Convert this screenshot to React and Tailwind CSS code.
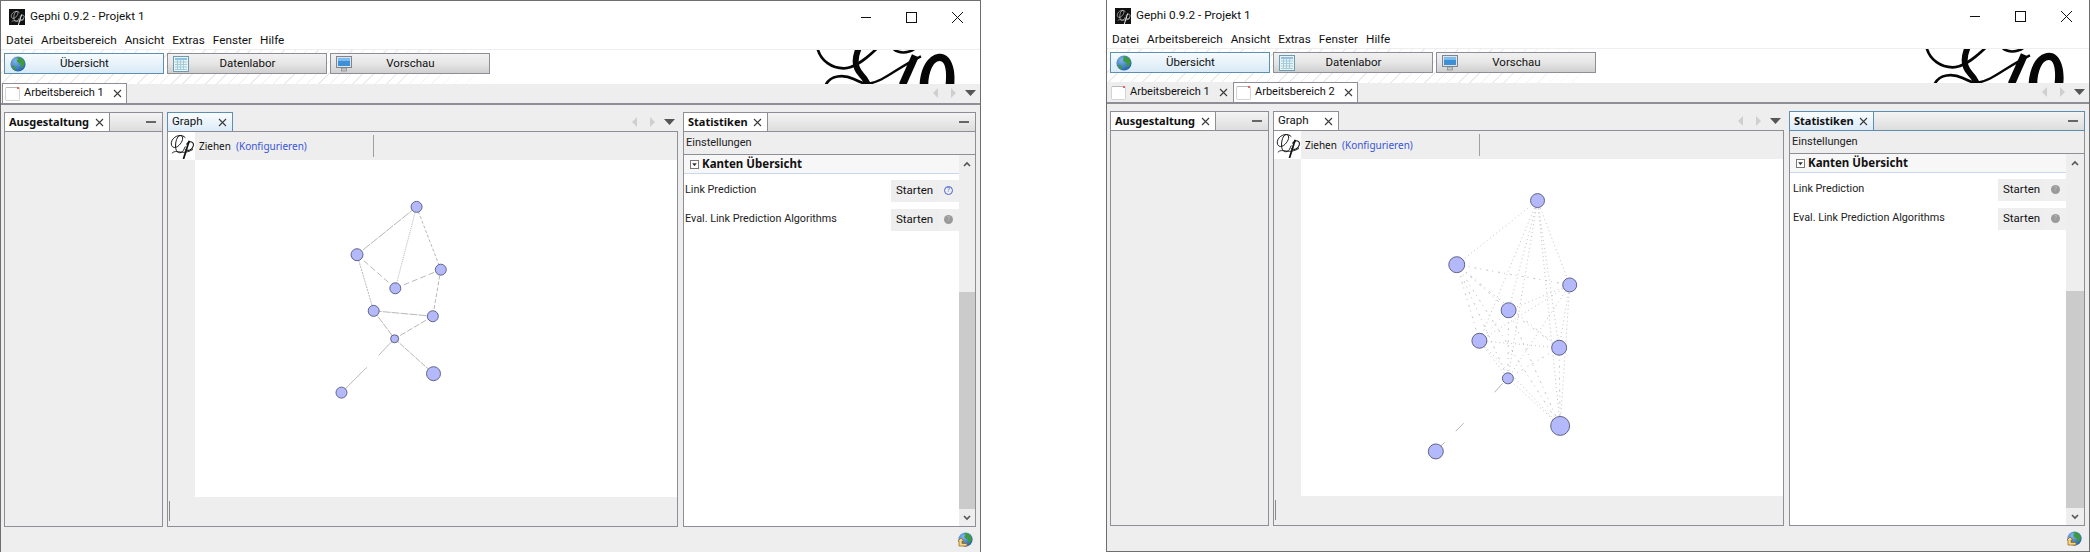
const nodesA = [
  [417, 207, 5.5], [357.3, 255, 6], [441.3, 270, 5.5], [395.7, 288.7, 5.5], [374, 311.3, 5.5],
  [433.3, 316.7, 5.5], [395, 339.3, 4], [434, 374.3, 7], [341.7, 393.3, 5.5],
];
const edgesA = [[0, 1, "9 1"], [0, 3, "1 1"], [0, 2, "3 2"], [1, 3, "6 3"], [3, 2, "6 3"], [1, 4, "2 1"], [2, 5, "4 2"], [4, 5, "8 1"], [4, 6, "7 1"], [5, 6, "6 2"], [6, 7, "6 1"]];

const nodesB = [
  [1538, 200.7, 7], [1457, 265, 8], [1570.3, 285.3, 7], [1509, 310.7, 7.5], [1479.7, 341.3, 7.5],
  [1559.7, 348.3, 7.5], [1508.3, 379, 5.5], [1560.7, 426.7, 9.5], [1436, 452.3, 7.5],
];

const Graph = ({ second }) => {
  const nodes = second ? nodesB : nodesA;
  const pairs = [];
  if (second) {
    for (let i = 0; i < 8; i++) for (let j = i + 1; j < 8; j++) pairs.push([i, j, i % 2 ? "1 5 2 4" : "1 3"]);
  } else {
    pairs.push(...edgesA);
  }
  return (
    <svg viewBox={second ? "1301 159 483 338" : "195 160 483 338"} className="block w-full h-full">
      {pairs.map(([a, b, dash], i) => (
        <line
          key={i}
          x1={nodes[a][0]}
          y1={nodes[a][1]}
          x2={nodes[b][0]}
          y2={nodes[b][1]}
          stroke={second ? "#bcbcbc" : "#a4a4a4"}
          strokeWidth={second ? 0.9 : 0.8}
          strokeDasharray={dash}
        />
      ))}
      {second ? (
        <g stroke="#b4b4b4" strokeWidth="1">
          <line x1="1503" y1="384" x2="1495" y2="393" />
          <line x1="1464" y1="424" x2="1456" y2="432" />
          <line x1="1445" y1="443" x2="1441" y2="447" />
        </g>
      ) : (
        <g stroke="#a8a8a8" strokeWidth="0.8">
          <line x1="395" y1="339" x2="379" y2="356" />
          <line x1="367" y1="368" x2="342" y2="393" />
        </g>
      )}
      {nodes.map(([x, y, r], i) => (
        <circle key={i} cx={x} cy={y} r={r} fill="#b3b9fb" stroke="#5f6288" strokeWidth="1" />
      ))}
    </svg>
  );
};

const CloseX = ({ className = "" }) => (
  <svg viewBox="0 0 9 9" className={`w-[9px] h-[9px] shrink-0 ${className}`}>
    <path d="M1 1L8 8M8 1L1 8" stroke="#3a3a3a" strokeWidth="1.1" />
  </svg>
);

const Globe = ({ size = 16 }) => (
  <svg viewBox="0 0 16 16" width={size} height={size} className="shrink-0">
    <defs>
      <radialGradient id="globeBlue" cx="35%" cy="30%" r="80%">
        <stop offset="0" stopColor="#7fb6e8" />
        <stop offset="1" stopColor="#1a5ba8" />
      </radialGradient>
    </defs>
    <circle cx="8" cy="8" r="7.6" fill="url(#globeBlue)" />
    <path d="M7 1.2C9 .8 13 2 14.6 6L14 9.5 12 12 10.5 10.5 11 8 8.5 7 6.5 5 8 3.5Z" fill="#3f9a3c" />
    <path d="M2 9.5L4.5 10 6 12.5 5 14.5C3.5 13.6 2.4 11.6 2 9.5Z" fill="#3f9a3c" />
  </svg>
);

const TableIcon = () => (
  <svg viewBox="0 0 16 16" width="16" height="16" className="shrink-0">
    <rect x=".5" y=".5" width="15" height="15" fill="#e8f2f2" stroke="#6f9bb0" />
    <rect x="2" y="2" width="12" height="2" fill="#8fc0e0" />
    <path d="M2 6H14M2 8.5H14M2 11H14M2 13.5H14M4.5 4V14M7.5 4V14M10.5 4V14" stroke="#9cc9d8" strokeWidth=".9" />
  </svg>
);

const MonitorIcon = () => (
  <svg viewBox="0 0 16 16" width="16" height="16" className="shrink-0">
    <rect x=".5" y=".5" width="15" height="11" fill="#dfe3e8" stroke="#7d8590" />
    <rect x="2" y="2" width="12" height="8" fill="#3d8fd6" />
    <rect x="2" y="2" width="12" height="3" fill="#7cbcec" />
    <rect x="5.5" y="12" width="5" height="3" fill="#c8c8c8" stroke="#7d8590" strokeWidth=".7" />
  </svg>
);

const GpMark = ({ color = "#111", className = "" }) => (
  <svg viewBox="0 0 27 27" className={className} fill="none" stroke={color}>
    <path d="M17 5C14 1 6 2 3 8 1 13 4 17 9 14 13 11 16 5 13 3 9 1 6 9 7 16 8 22 14 22 16 16L17 14" strokeWidth="1" />
    <path d="M21 8L15 27" strokeWidth="1.8" />
    <path d="M18 12C21 7 27 9 25 14 24 18 20 19 17 17" strokeWidth="1.1" />
    <path d="M3 21C8 16 14 24 25 17" strokeWidth=".9" />
  </svg>
);

const BigLogo = () => (
  <svg viewBox="40 17 440 102" className="w-[150px] h-[34px] shrink-0 mr-[18px]" fill="none" stroke="#060606">
    <path d="M52 14C62 50 95 72 130 72 160 72 190 50 228 14" strokeWidth="8" />
    <path d="M174 14C164 40 160 65 182 90 192 100 198 110 204 122" strokeWidth="18" />
    <path d="M76 122C90 92 130 90 160 104 175 111 190 118 204 122" strokeWidth="8" />
    <path d="M204 118C250 112 290 70 362 36" strokeWidth="7" />
    <path d="M280 14C295 28 322 28 342 14" strokeWidth="8" />
    <path d="M345 34L306 122" strokeWidth="22" />
    <path d="M358 119C362 60 390 28 420 28 450 28 467 70 462 119L436 119C440 80 435 50 418 50 398 50 385 85 384 119Z" fill="#060606" stroke="none" />
  </svg>
);

const NavArrows = ({ className = "" }) => (
  <svg viewBox="0 0 44 10" className={`w-[44px] h-[10px] shrink-0 ${className}`}>
    <path d="M5 0V10L0 5Z" fill="#cfcfcf" />
    <path d="M18 0V10L23 5Z" fill="#cfcfcf" />
    <path d="M32 2H43L37.5 8Z" fill="#555" />
  </svg>
);

const TabIcon = () => (
  <span className="block w-[15px] h-[14px] shrink-0 bg-white border border-[#d4d4d4] rounded-[2px] border-t-[#b8b8b8] relative">
    <span className="absolute -top-px right-0 w-[2px] h-[2px] bg-[#e06a5a]" />
  </span>
);

const NavButton = ({ icon, label, active }) => (
  <div
    className={`w-[160px] h-[21px] flex items-center pl-[5px] border ${
      active
        ? "border-[#5d8fb0] bg-[linear-gradient(#f6fbfe,#d9eaf6)]"
        : "border-[#8e8e96] bg-[linear-gradient(#f1f1f1,#e6e6e6_50%,#cfcfcf)]"
    }`}
  >
    {icon}
    <span className="flex-1 text-center pr-[20px] text-[11.5px] text-[#111]">{label}</span>
  </div>
);

const WorkspaceTab = ({ label, active }) => (
  <div
    className={`w-[125px] h-[20px] flex items-center pl-[2px] border-x border-t ${
      active ? "bg-white border-[#8e8e96]" : "bg-[#eeeeee] border-transparent"
    }`}
  >
    <TabIcon />
    <span className="ml-[4px] flex-1 text-[11px] text-[#111]">{label}</span>
    <CloseX className="mr-[4px]" />
  </div>
);

const PanelTab = ({ label, bold, active, width }) => (
  <div
    className={`${width} h-[20px] flex items-center justify-between pl-[4px] pr-[5px] border ${
      active ? "border-[#5d8fb0] bg-[linear-gradient(#fafdff,#dcebf8)]" : "border-[#8e8e96] bg-white"
    }`}
  >
    <span className={`text-[#111] ${bold ? "font-['Noto_Sans',sans-serif] font-bold text-[11px]" : "text-[11.5px]"}`}>{label}</span>
    <CloseX />
  </div>
);

const Minus = () => <span className="block w-[10px] h-[2px] bg-[#666] mr-[6px]" />;

const HelpDot = ({ blue }) =>
  blue ? (
    <span className="flex items-center justify-center w-[9px] h-[9px] rounded-full border border-[#4a63d0] text-[7px] leading-none text-[#4a63d0]">?</span>
  ) : (
    <span className="flex items-center justify-center w-[9px] h-[9px] rounded-full bg-[#9a9a9a] text-[7px] leading-none text-[#bdbdbd]">?</span>
  );

const StatRow = ({ label, blue, indent }) => (
  <div className={`h-[23px] flex items-center ${indent} mb-[6px]`}>
    <span className="flex-1 text-[10.8px] text-[#222]">{label}</span>
    <span className="w-[47px] h-[22px] flex items-center justify-center bg-[#eeeeee] text-[11.5px] text-[#111]">Starten</span>
    <span className="w-[21px] h-[22px] flex items-center justify-center bg-[#efefef]">
      <HelpDot blue={blue} />
    </span>
  </div>
);

const GephiWindow = ({ second }) => (
  <div
    className={`flex flex-col shrink-0 h-[552px] border-x border-[#6e6e6e] bg-white ${
      second ? "w-[984px] border-b" : "w-[981px] border-t"
    }`}
  >
    {/* title bar */}
    <div className="h-[32px] shrink-0 flex items-center pl-[8px]">
      <span className="flex items-center justify-center w-[16px] h-[16px] bg-[#111] shrink-0">
        <GpMark color="#eee" className="w-[15px] h-[15px]" />
      </span>
      <span className="ml-[5px] text-[11.75px] text-[#111]">Gephi 0.9.2 - Projekt 1</span>
      <svg viewBox="0 0 112 12" className="w-[112px] h-[12px] ml-auto mr-[7px]">
        <path d="M0 6.5H10" stroke="#111" />
        <rect x="45.5" y="1.5" width="10" height="10" fill="none" stroke="#111" />
        <path d="M91 1L102 12M102 1L91 12" stroke="#111" />
      </svg>
    </div>

    {/* menu */}
    <div className="h-[17px] shrink-0 flex items-center pl-[5px] gap-[8px] border-b border-[#eeeeee] text-[11.75px] text-[#111]">
      <span>Datei</span>
      <span>Arbeitsbereich</span>
      <span>Ansicht</span>
      <span>Extras</span>
      <span>Fenster</span>
      <span>Hilfe</span>
    </div>

    {/* perspective buttons */}
    <div className="h-[34px] shrink-0 flex justify-between overflow-hidden">
      <div className="w-[500px] pl-[3px] pt-[3px] flex gap-[3px] items-start bg-[linear-gradient(90deg,transparent_75%,#ffffff_100%),repeating-linear-gradient(135deg,#ececec_0,#ececec_1px,#ffffff_1px,#ffffff_8px)]">
        <NavButton icon={<Globe />} label="Übersicht" active />
        <NavButton icon={<TableIcon />} label="Datenlabor" />
        <NavButton icon={<MonitorIcon />} label="Vorschau" />
      </div>
      <BigLogo />
    </div>

    {/* workspace tabs */}
    <div className="h-[21px] shrink-0 flex items-end bg-[#eeeeee] border-b-2 border-[#8e8e96] pl-[1px]">
      {second && <WorkspaceTab label="Arbeitsbereich 1" />}
      <WorkspaceTab label={second ? "Arbeitsbereich 2" : "Arbeitsbereich 1"} active />
      <NavArrows className="ml-auto mr-[3px] mb-[5px]" />
    </div>

    {/* panels */}
    <div className="flex-1 min-h-0 flex flex-col bg-[#eeeeee]">
      <div className="flex-1 min-h-0 flex pt-[7px] pl-[3px]">
        {/* Ausgestaltung */}
        <div className="w-[159px] shrink-0 flex flex-col">
          <div className="h-[20px] shrink-0 flex">
            <PanelTab label="Ausgestaltung" bold width="w-[106px]" />
            <div className="flex-1 flex items-center justify-end border-y border-r border-[#8e8e96] bg-[linear-gradient(#f4f4f4,#dddddd)]">
              <Minus />
            </div>
          </div>
          <div className="flex-1 border-x border-b border-[#8e8e96]" />
        </div>

        {/* Graph */}
        <div className="w-[511px] shrink-0 ml-[4px] flex flex-col">
          <div className="h-[20px] shrink-0 flex items-center justify-between">
            <PanelTab label="Graph" active={!second} width="w-[66px]" />
            <NavArrows className="mr-[2px]" />
          </div>
          <div className="flex-1 min-h-0 flex flex-col border border-t border-[#8e8e96] -mt-px">
            <div className="h-[28px] shrink-0 flex items-center">
              <span className="flex items-center justify-center w-[27px] h-[28px] bg-white shrink-0">
                <GpMark className="w-[26px] h-[26px]" />
              </span>
              <span className="ml-[4px] font-['Noto_Sans',sans-serif] text-[10px] text-[#111]">Ziehen</span>
              <span className="ml-[5px] font-['Noto_Sans',sans-serif] text-[10px] text-[#3a55d8]">(Konfigurieren)</span>
              <span className="ml-[66px] w-px h-[22px] bg-[#a0a0a0]" />
            </div>
            <div className="flex-1 min-h-0 flex">
              <div className="w-[27px] shrink-0" />
              <div className="flex-1 bg-white">
                <Graph second={second} />
              </div>
            </div>
            <div className="h-[29px] shrink-0 pl-px pt-[4px]">
              <span className="block w-px h-[20px] bg-[#888]" />
            </div>
          </div>
        </div>

        {/* Statistiken */}
        <div className={`${second ? "w-[296px]" : "w-[293px]"} shrink-0 ml-[5px] flex flex-col`}>
          <div className="h-[20px] shrink-0 flex">
            <PanelTab label="Statistiken" bold active={second} width="w-[85px]" />
            <div
              className={`flex-1 flex items-center justify-end border-y border-r bg-[linear-gradient(#f4f4f4,#dddddd)] ${
                second ? "border-[#5d8fb0]" : "border-[#8e8e96]"
              }`}
            >
              <Minus />
            </div>
          </div>
          <div className="flex-1 min-h-0 flex flex-col border-x border-b border-[#8e8e96]">
            <div className="h-[23px] shrink-0 flex items-center pl-[2px] text-[11px] text-[#222] border-b border-[#8e8e96]">
              Einstellungen
            </div>
            <div className="flex-1 min-h-0 flex">
              <div className="flex-1 bg-white">
                <div className="h-[19px] flex items-center pl-[6px] bg-[#f7f7f7] border-b border-[#c9d8f0]">
                  <span className="flex items-center justify-center w-[9px] h-[9px] border border-[#777] bg-white">
                    <svg viewBox="0 0 6 6" className="w-[7px] h-[7px]">
                      <path d="M1 2H5L3 4.5Z" fill="#333" />
                    </svg>
                  </span>
                  <span className="ml-[3px] font-['Noto_Sans',sans-serif] font-bold text-[11.5px] text-[#111]">Kanten Übersicht</span>
                </div>
                <div className="pt-[5px]">
                  <StatRow label="Link Prediction" blue={!second} indent={second ? "pl-[3px]" : "pl-px"} />
                  <StatRow label="Eval. Link Prediction Algorithms" indent={second ? "pl-[3px]" : "pl-px"} />
                </div>
              </div>
              <div className={`${second ? "w-[18px]" : "w-[16px]"} shrink-0 flex flex-col bg-[#eeeeee]`}>
                <div className="h-[18px] flex items-center justify-center">
                  <svg viewBox="0 0 8 6" className="w-[8px] h-[6px]">
                    <path d="M1 5L4 2 7 5" fill="none" stroke="#555" strokeWidth="1.6" />
                  </svg>
                </div>
                <div className="flex-1 mt-[119px] bg-[#cbcbcb]" />
                <div className="h-[17px] flex items-center justify-center">
                  <svg viewBox="0 0 8 6" className="w-[8px] h-[6px]">
                    <path d="M1 1L4 4 7 1" fill="none" stroke="#555" strokeWidth="1.6" />
                  </svg>
                </div>
              </div>
            </div>
          </div>
        </div>
      </div>

      {/* status bar */}
      <div className="h-[25px] shrink-0 flex items-center justify-end pr-[7px]">
        <span className="relative block w-[15px] h-[15px]">
          <Globe size={15} />
          <svg viewBox="0 0 10 10" className="absolute left-0 bottom-0 w-[10px] h-[10px]">
            <path d="M1 9V4H0L3 1 6 4H4V6.500H9V9Z" fill="#f4d68c" stroke="#9a6a1e" strokeWidth=".8" />
          </svg>
        </span>
      </div>
    </div>
  </div>
);

export default function App() {
  return (
    <div className="w-[2090px] h-[552px] flex justify-between overflow-hidden bg-white font-['Roboto',sans-serif]">
      <GephiWindow />
      <GephiWindow second />
    </div>
  );
}
